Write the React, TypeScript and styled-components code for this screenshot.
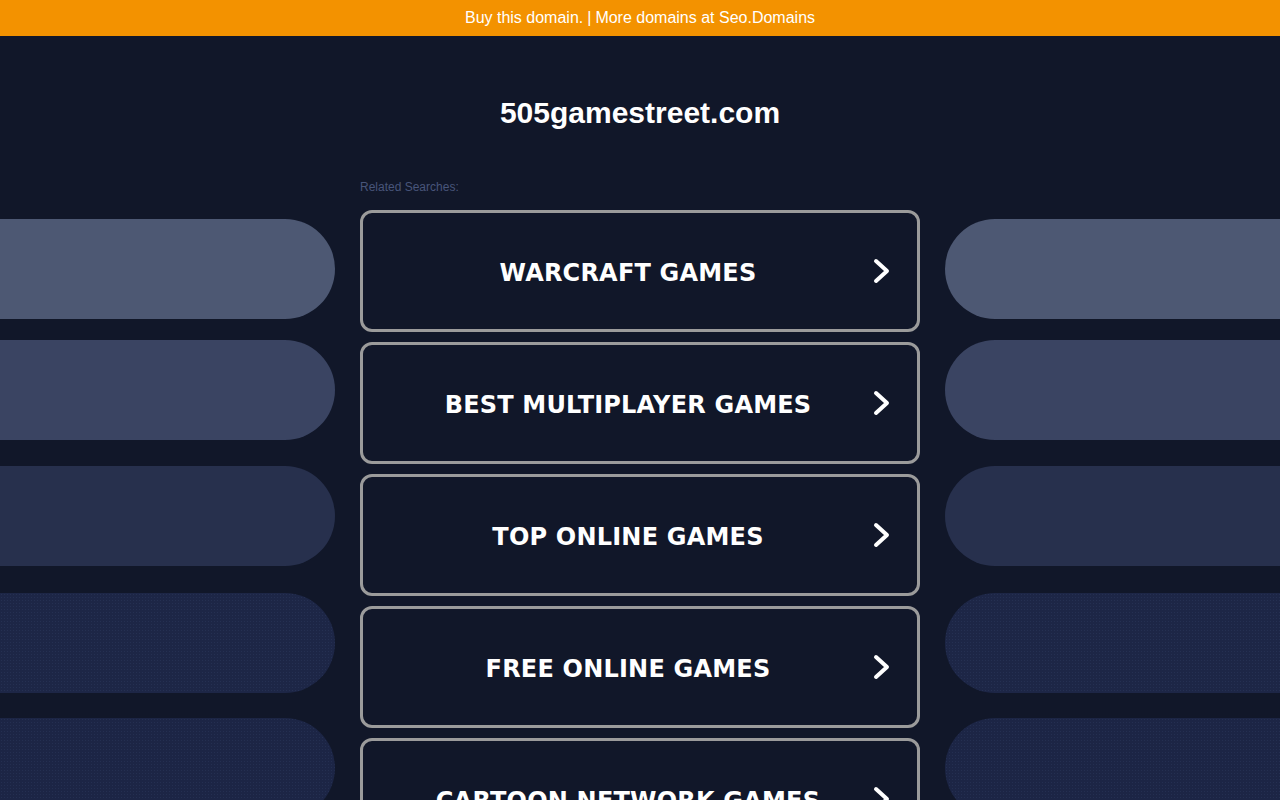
import React from "react";
import styled, { createGlobalStyle, css } from "styled-components";

const GlobalStyle = createGlobalStyle`
  html, body {
    margin: 0;
    padding: 0;
    background: #111729;
    overflow: hidden;
  }
  * { box-sizing: border-box; }
`;

const Page = styled.div`
  min-height: 800px;
  background: #111729;
  font-family: "Liberation Sans", Arial, sans-serif;
`;

const TopBar = styled.div`
  height: 36px;
  background: #f39200;
  display: flex;
  justify-content: center;
  align-items: center;
  gap: 4px;
  color: #ffffff;
  font-size: 16px;
`;

const TopLink = styled.a`
  color: #ffffff;
  text-decoration: none;
  cursor: pointer;
`;

const Title = styled.h1`
  margin: 61px 0 0;
  text-align: center;
  color: #ffffff;
  font-size: 30px;
  line-height: 32px;
  font-weight: bold;
`;

const Layout = styled.div`
  display: grid;
  grid-template-columns: 335px 560px 335px;
  column-gap: 25px;
  margin-top: 50px;
`;

const SideColumn = styled.div`
  display: flex;
  flex-direction: column;
  padding-top: 40px;
`;

const dotted = css`
  background-image: radial-gradient(rgba(90, 110, 160, 0.14) 0.6px, transparent 0.9px);
  background-size: 3px 3px;
`;

const Pill = styled.div<{ $tone: string; $side: "left" | "right"; $top: number; $dots?: boolean }>`
  height: 100px;
  margin-top: ${(p) => p.$top}px;
  background-color: ${(p) => p.$tone};
  ${(p) => p.$dots && dotted}
  border-radius: ${(p) => (p.$side === "left" ? "0 50px 50px 0" : "50px 0 0 50px")};
`;

const Center = styled.div`
  display: flex;
  flex-direction: column;
`;

const Label = styled.div`
  font-size: 12px;
  line-height: 14px;
  color: #48557a;
  margin: 1px 0 16px;
`;

const List = styled.div`
  display: flex;
  flex-direction: column;
  gap: 10px;
`;

const SearchButton = styled.a`
  height: 122px;
  border: 3px solid #9b9b9b;
  border-radius: 12px;
  background: #111729;
  display: flex;
  align-items: center;
  padding: 0 26px 0 30px;
  cursor: pointer;
  text-decoration: none;
`;

const ButtonText = styled.span`
  flex: 1;
  text-align: center;
  margin-right: 10px;
  padding-top: 3px;
  color: #ffffff;
  font-family: "DejaVu Sans", Verdana, sans-serif;
  font-weight: bold;
  font-size: 24px;
  letter-spacing: 0.2px;
`;

const Chevron = () => (
  <svg width="18" height="26" viewBox="0 0 18 26" fill="none">
    <path
      d="M3 3 L14 13 L3 23"
      stroke="#ffffff"
      strokeWidth="4"
      strokeLinecap="round"
      strokeLinejoin="round"
    />
  </svg>
);

const searches = [
  "WARCRAFT GAMES",
  "BEST MULTIPLAYER GAMES",
  "TOP ONLINE GAMES",
  "FREE ONLINE GAMES",
  "CARTOON NETWORK GAMES",
];

const pills = [
  { tone: "#4d5873", top: 0 },
  { tone: "#3a4462", top: 21 },
  { tone: "#27304d", top: 26 },
  { tone: "#1d2646", top: 27, dots: true },
  { tone: "#1c2545", top: 25, dots: true },
];

export default function App() {
  return (
    <>
      <GlobalStyle />
      <Page>
        <TopBar>
          <TopLink>Buy this domain.</TopLink>
          <span>|</span>
          <TopLink>More domains at Seo.Domains</TopLink>
        </TopBar>
        <Title>505gamestreet.com</Title>
        <Layout>
          <SideColumn>
            {pills.map((p, i) => (
              <Pill key={i} $tone={p.tone} $side="left" $top={p.top} $dots={p.dots} />
            ))}
          </SideColumn>
          <Center>
            <Label>Related Searches:</Label>
            <List>
              {searches.map((s) => (
                <SearchButton key={s}>
                  <ButtonText>{s}</ButtonText>
                  <Chevron />
                </SearchButton>
              ))}
            </List>
          </Center>
          <SideColumn>
            {pills.map((p, i) => (
              <Pill key={i} $tone={p.tone} $side="right" $top={p.top} $dots={p.dots} />
            ))}
          </SideColumn>
        </Layout>
      </Page>
    </>
  );
}
